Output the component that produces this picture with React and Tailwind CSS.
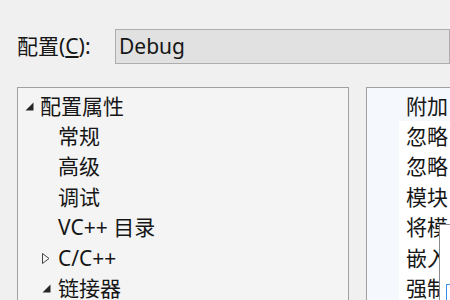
import React from "react";

const font = { fontFamily: '"Noto Sans", "Noto Sans CJK SC", sans-serif' };

function Filled() {
  return (
    <svg width="9" height="9" viewBox="0 0 9 9" className="shrink-0">
      <polygon points="8.5,0.5 8.5,8.5 0.5,8.5" fill="#262626" />
    </svg>
  );
}
function Outline() {
  return (
    <svg width="8" height="11" viewBox="0 0 8 11" className="shrink-0">
      <polygon points="0.5,0.5 7,5.5 0.5,10.5" fill="none" stroke="#444" strokeWidth="1" />
    </svg>
  );
}

export default function App() {
  const tree = [
    { t: "配置属性", lvl: 0, icon: "f" },
    { t: "常规", lvl: 1 },
    { t: "高级", lvl: 1 },
    { t: "调试", lvl: 1 },
    { t: "VC++ 目录", lvl: 1 },
    { t: "C/C++", lvl: 1, icon: "o" },
    { t: "链接器", lvl: 1, icon: "f" },
  ];
  const props = ["附加", "忽略", "忽略", "模块", "将模", "嵌入", "强制"];
  return (
    <div className="w-[450px] h-[300px] bg-[#f0f0f0] overflow-hidden relative text-[#161616]" style={font}>
      <div className="flex items-center pt-[29px] h-[64px]">
        <div className="w-[115px] pl-[17px] text-[21px] leading-none">配置(<span className="underline underline-offset-2">C</span>):</div>
        <div className="flex-1 h-[35px] border border-[#adadad] bg-[#e1e1e1] flex items-center pl-[3px] text-[21px] leading-none">Debug</div>
      </div>
      <div className="flex mt-[23px] h-[220px]">
        <div className="ml-[17px] w-[332px] border-l border-t border-r border-[#a0a0a0] bg-[#f4f4f4] pt-[3px]">
          {tree.map((r, i) => (
            <div key={i} className="h-[30.4px] flex items-center text-[21px] leading-none">
              <div className={r.lvl === 0 ? "w-[22px] pl-[7px] flex items-center" : "w-[40px] pl-[24px] flex items-center"}>
                {r.icon === "f" && <Filled />}
                {r.icon === "o" && <Outline />}
              </div>
              <span>{r.t}</span>
            </div>
          ))}
        </div>
        <div className="ml-[17px] flex-1 border-l border-t border-[#a0a0a0] bg-[#f5f8fd] pt-[3px]">
          {props.map((p, i) => (
            <div key={i} className="h-[30.4px] flex text-[21px] leading-none">
              <div className="w-[32px]" />
              <div className={i === 0 ? "flex-1 flex items-center pl-[7px]" : "flex-1 flex items-center pl-[7px] bg-white"}>{p}</div>
            </div>
          ))}
        </div>
      </div>
      <div className="absolute left-[439px] top-[224px] w-[20px] h-[80px] bg-white border-l border-t border-[#8a8a8a]">
        <div className="ml-[6px] mt-[59px] w-[20px] h-[20px] border-l border-t border-[#3d8ee6]" />
      </div>
    </div>
  );
}
